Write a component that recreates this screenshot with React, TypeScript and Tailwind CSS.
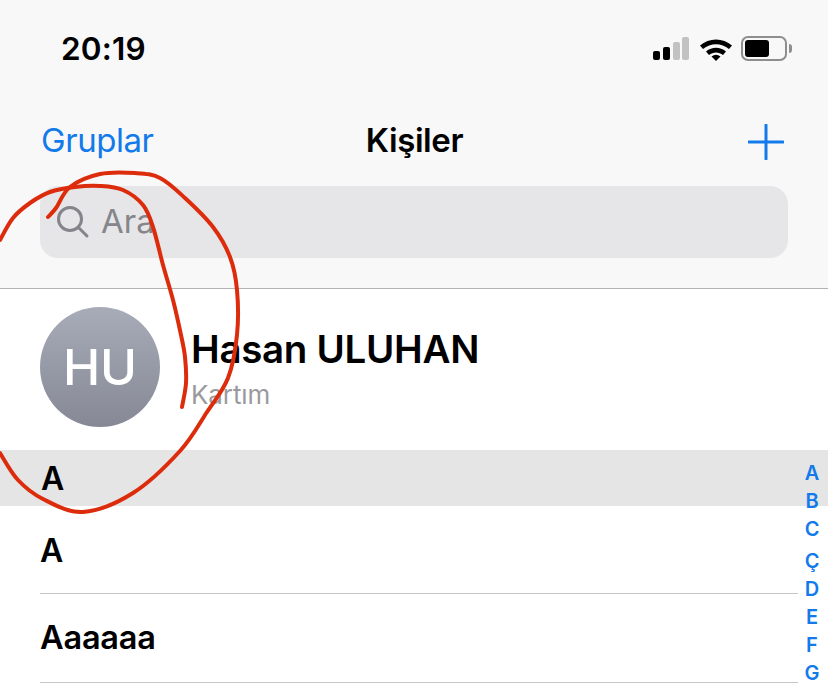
const FONT = "font-['Inter','Liberation_Sans',sans-serif]";

const letters = [
  { l: "A", c: "mt-[0px]" },
  { l: "B", c: "mt-[0px]" },
  { l: "C", c: "mt-[0px]" },
  { l: "Ç", c: "mt-[4px]" },
  { l: "D", c: "mt-[0px]" },
  { l: "E", c: "mt-[0px]" },
  { l: "F", c: "mt-[0px]" },
  { l: "G", c: "mt-[0px]" },
];

type P = [number, number];
function smooth(pts: P[]) {
  let d = `M${pts[0][0]} ${pts[0][1]}`;
  for (let i = 0; i < pts.length - 1; i++) {
    const p0 = pts[Math.max(i - 1, 0)];
    const p1 = pts[i];
    const p2 = pts[i + 1];
    const p3 = pts[Math.min(i + 2, pts.length - 1)];
    const c1x = p1[0] + (p2[0] - p0[0]) / 6;
    const c1y = p1[1] + (p2[1] - p0[1]) / 6;
    const c2x = p2[0] - (p3[0] - p1[0]) / 6;
    const c2y = p2[1] - (p3[1] - p1[1]) / 6;
    d += ` C${c1x} ${c1y} ${c2x} ${c2y} ${p2[0]} ${p2[1]}`;
  }
  return d;
}

const outer: P[] = [
  [48, 217], [56, 208], [70, 187], [100, 174], [135, 173], [160, 178], [185, 198], [213, 227],
  [230, 257], [237, 290], [237, 335], [228, 378], [207, 412], [180, 451], [133, 493], [83, 512], [43, 499], [18, 480], [0, 453],
];
const inner: P[] = [
  [0, 240], [13, 218], [30, 203], [50, 192], [75, 187], [100, 186], [123, 190], [143, 205], [153, 227],
  [163, 265], [173, 300], [181, 335], [185, 357], [186, 383], [182, 407],
];

function StatusIcons() {
  return (
    <div className="flex items-center">
      <svg width="36" height="24" viewBox="0 0 36 24" className="mr-[10px]">
        <rect x="0" y="14" width="7" height="9" rx="2" fill="#000" />
        <rect x="10" y="10" width="7" height="13" rx="2" fill="#000" />
        <rect x="20" y="5" width="7" height="18" rx="2" fill="#c2c2c2" />
        <rect x="29" y="0" width="7" height="23" rx="2" fill="#c2c2c2" />
      </svg>
      <svg width="34" height="24" viewBox="0 0 34 24" className="mr-[8px]">
        <path d="M1 8.5 C10 0.5 24 0.5 33 8.5 L30 12 C22.5 5.5 11.5 5.5 4 12 Z" fill="#000" />
        <path d="M7 14.5 C13 9.5 21 9.5 27 14.5 L24 18 C20 14.5 14 14.5 10 18 Z" fill="#000" />
        <path d="M12.5 19.5 C15.5 17.3 18.5 17.3 21.5 19.5 L17 24 Z" fill="#000" />
      </svg>
      <div className="relative w-[46px] h-[25px] rounded-[7px] border-[2px] border-[#8e8e8e] p-[2px]">
        <div className="w-[24px] h-full rounded-[3px] bg-black" />
      </div>
      <div className="ml-[2px] w-[3px] h-[9px] rounded-r-[3px] bg-[#8e8e8e]" />
    </div>
  );
}

export default function App() {
  return (
    <div className={`${FONT} relative w-[828px] h-[693px] overflow-hidden bg-white text-black`}>
      <header className="h-[289px] bg-[#f8f8f8] border-b border-[#b2b2b2] flex flex-col">
        <div className="h-[98px] pl-[61px] pr-[36px] pt-[28px] flex items-start justify-between">
          <span className="text-[31.5px] leading-[42px] font-semibold tracking-[0.2px]">20:19</span>
          <div className="pt-[8px]">
            <StatusIcons />
          </div>
        </div>
        <div className="h-[88px] pl-[41px] pr-[44px] grid grid-cols-3 items-center">
          <span className="text-[33px] leading-[40px] mb-[5px] text-[#127aea] tracking-[-0.45px]">Gruplar</span>
          <span className="text-[33px] leading-[40px] mb-[5px] font-semibold tracking-[-0.4px] text-center pl-[4px]">Kişiler</span>
          <svg className="justify-self-end" width="36" height="36" viewBox="0 0 36 36" fill="none" stroke="#127aea" strokeWidth="3" strokeLinecap="round">
            <path d="M18 1 V35 M1 18 H35" />
          </svg>
        </div>
        <div className="mx-[40px] h-[72px] rounded-[18px] bg-[#e6e6e8] flex items-center pl-[16px]">
          <svg width="34" height="34" viewBox="0 0 34 34" fill="none" stroke="#84848a" strokeWidth="3" strokeLinecap="round">
            <circle cx="14" cy="14" r="11.5" />
            <path d="M22.5 22.5 L31 31" />
          </svg>
          <span className="ml-[11px] text-[33px] text-[#85858b]">Ara</span>
        </div>
      </header>

      <section className="h-[161px] flex items-center pl-[40px]">
        <div className="w-[120px] h-[120px] rounded-full bg-gradient-to-b from-[#a7acb8] to-[#868995] flex items-center justify-center mb-[5px]">
          <span className="text-[50px] font-medium text-white">HU</span>
        </div>
        <div className="ml-[31px] flex flex-col mb-[3px]">
          <span className="text-[38.5px] leading-[44px] font-semibold tracking-[-0.3px]">Hasan ULUHAN</span>
          <span className="text-[26px] leading-[30px] mt-[9px] text-[#9a9a9e] tracking-[-0.1px]">Kartım</span>
        </div>
      </section>

      <div className="h-[56px] bg-[#e5e5e5] pl-[41px] flex items-center">
        <span className="text-[32px] font-semibold mt-[2px]">A</span>
      </div>
      <div className="ml-[40px] mr-[30px] h-[88px] border-b border-[#c6c6c8] flex items-center">
        <span className="text-[32px] font-semibold mt-[2px]">A</span>
      </div>
      <div className="ml-[40px] mr-[30px] h-[89px] border-b border-[#c6c6c8] flex items-center">
        <span className="text-[32.5px] font-semibold tracking-[-0.2px]">Aaaaaa</span>
      </div>

      <div className="absolute right-[6px] top-[459px] w-[20px] flex flex-col items-center text-[#127aea] text-[20px] leading-[28px] font-semibold">
        {letters.map((x) => (
          <span key={x.l} className={x.c}>{x.l}</span>
        ))}
      </div>

      <svg className="absolute left-0 top-0 pointer-events-none" width="828" height="693" viewBox="0 0 828 693" fill="none" stroke="#dc2c0c" strokeWidth="4" strokeLinecap="round" strokeLinejoin="round">
        <path d={smooth(outer)} />
        <path d={smooth(inner)} />
      </svg>
    </div>
  );
}
